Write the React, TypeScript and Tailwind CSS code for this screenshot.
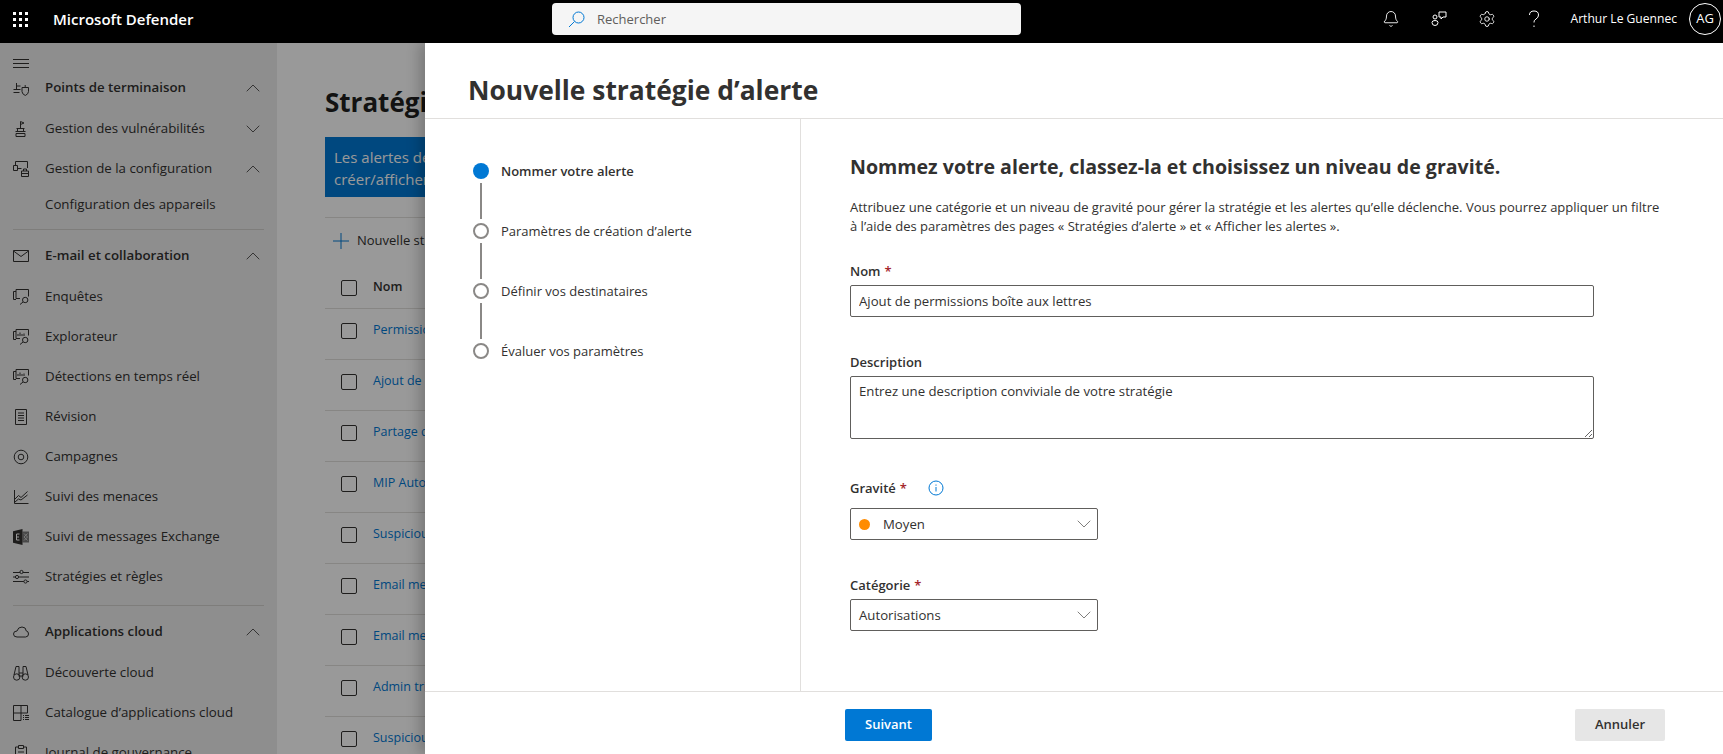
import { Bell, ChevronDown, ChevronUp, Settings } from "lucide-react";
import type { ReactNode } from "react";

const Ic = ({ children }: { children: ReactNode }) => (
  <svg width="16" height="16" viewBox="0 0 16 16" fill="none" stroke="currentColor" strokeWidth="1" className="shrink-0">
    {children}
  </svg>
);

const icons: Record<string, ReactNode> = {
  endpoint: (
    <Ic>
      <path d="M0.5 9.5h7M3.5 3v6.5M3.5 6h4M0.5 12.5h6" />
      <path d="M9 7.5h6.5v4q0 2.5-3.2 4q-3.3-1.5-3.3-4zM12.2 5v2.5" />
    </Ic>
  ),
  vuln: (
    <Ic>
      <path d="M7.5 7V0.5l3.5 1.5-3.5 1.500M3.500 7.500h8M4.500 7.500v3h6v-3M2.500 10.500h10M3 12.500h9v3H3z" />
    </Ic>
  ),
  config: (
    <Ic>
      <path d="M2.500 4V0.500h12V7M0.500 4.500h4v5h-4zM4.500 7.500h4M8.500 10h7v5.500h-7zM10.500 10V8h3v2M8.500 12.500h7" />
    </Ic>
  ),
  mail: (
    <Ic>
      <path d="M0.500 2.500h15v11h-15zM0.500 3l7.500 5.500L15.500 3" />
    </Ic>
  ),
  investigate: (
    <Ic>
      <path d="M3 10.500H0.500v-8H3M3 0.500h12.500v7M3 0.500v9h4" />
      <circle cx="12.200" cy="11" r="2.700" />
      <path d="M10 13L7 15.500" />
    </Ic>
  ),
  explorer: (
    <Ic>
      <path d="M3 10.500H0.500v-8H3M3 0.500h12.500v6M3 0.500v9h4M5 7V5M7 7V3.500M9 7V5M11 7V4.500" />
      <circle cx="12.200" cy="11" r="2.700" />
      <path d="M10 13L7 15.500" />
    </Ic>
  ),
  review: (
    <Ic>
      <path d="M2.500 0.500h11v15h-11zM5 4h6M5 6.500h6M5 9h6M5 11.500h6" />
    </Ic>
  ),
  campaign: (
    <Ic>
      <circle cx="8" cy="8" r="6.800" />
      <circle cx="8" cy="8" r="2.800" />
    </Ic>
  ),
  threat: (
    <Ic>
      <path d="M1.500 1v13.500h14M2 10l3.500-3.500L8 8.500l6.500-6M2 13l3.500-3L8 11l6.500-5" />
    </Ic>
  ),
  exchange: (
    <svg width="16" height="16" viewBox="0 0 16 16" className="shrink-0">
      <path d="M9.500 2.500H16v11H9.500z" fill="#7a7a7a" />
      <path d="M11 4.500l3.500 3.500-3.500 3.500M14.500 4.500L11 8l3.500 3.500" stroke="#c8c8c8" strokeWidth="1" fill="none" />
      <path d="M0 2.200L9.500 0v16L0 13.800z" fill="#323130" />
      <path d="M6.500 5H3.500v6h3M3.500 8h2.500" stroke="#ffffff" strokeWidth="1" fill="none" />
    </svg>
  ),
  rules: (
    <Ic>
      <path d="M0 3.500h16M0 8h16M0 12.500h16" />
      <circle cx="8.500" cy="3" r="1.600" fill="#ededed" />
      <circle cx="4" cy="8" r="1.600" fill="#ededed" />
      <circle cx="12.500" cy="12.500" r="1.600" fill="#ededed" />
    </Ic>
  ),
  cloud: (
    <Ic>
      <path d="M4 13q-3.500 0-3.500-3T4 7q1-4 5-4t4.300 4q2.200.2 2.200 3t-3 3z" />
    </Ic>
  ),
  discover: (
    <Ic>
      <circle cx="3.700" cy="12" r="3.200" />
      <circle cx="12.300" cy="12" r="3.200" />
      <path d="M1 10l2-8.500h3v10M15 10L13 1.500h-3v10M6 8h4M6 11h4" />
    </Ic>
  ),
  catalog: (
    <Ic>
      <path d="M0.500 0.500h14v7.500h-6.500v7.500H0.500zM8 0.500V8M0.500 8H8M10 10.500h1M12 10.500h4M10 12.500h1M12 12.500h4M10 14.500h1M12 14.500h4" />
    </Ic>
  ),
  journal: (
    <Ic>
      <path d="M5 2H2.500v13.500h11V2H11M5.500 0.500h5v3h-5zM5 7h6M5 9.500h6M5 12h6" />
    </Ic>
  ),
};

function NavRow({ icon, label, bold, chevron }: { icon?: string; label: string; bold?: boolean; chevron?: "up" | "down" }) {
  return (
    <div className={`flex h-10 items-center pl-[13px] pr-[12px] text-[#323130] ${bold ? "mb-[1px]" : ""}`}>
      <span className="flex w-[32px] shrink-0">{icon ? icons[icon] : null}</span>
      <span className={`flex-1 text-[13.3px] ${bold ? "font-semibold" : ""}`}>{label}</span>
      {chevron === "up" && <ChevronUp size={24} strokeWidth={0.8} />}
      {chevron === "down" && <ChevronDown size={24} strokeWidth={0.8} />}
    </div>
  );
}

const Sep = () => <div className="mx-[13px] mb-[6px] mt-[8px] h-[1px] bg-[#d2d0ce]" />;

function Sidebar() {
  return (
    <aside className="flex h-full w-[277px] shrink-0 flex-col bg-[#ededed]">
      <div className="flex h-[39px] shrink-0 items-start pl-[13px] pt-[16px] text-[#323130]">
        <svg width="16" height="10" viewBox="0 0 16 10" fill="none" stroke="currentColor" strokeWidth="1">
          <path d="M0 0.500h16M0 4.500h16M0 8.500h16" />
        </svg>
      </div>
      <div className="flex-1 overflow-hidden">
        <div className="-mt-[14px]">
          <NavRow icon="endpoint" label="Points de terminaison" bold chevron="up" />
          <NavRow icon="vuln" label="Gestion des vulnérabilités" chevron="down" />
          <NavRow icon="config" label="Gestion de la configuration" chevron="up" />
          <div className="flex h-[32px] items-center pl-[45px] text-[13.3px] text-[#323130]">Configuration des appareils</div>
          <Sep />
          <NavRow icon="mail" label="E-mail et collaboration" bold chevron="up" />
          <NavRow icon="investigate" label="Enquêtes" />
          <NavRow icon="explorer" label="Explorateur" />
          <NavRow icon="explorer" label="Détections en temps réel" />
          <NavRow icon="review" label="Révision" />
          <NavRow icon="campaign" label="Campagnes" />
          <NavRow icon="threat" label="Suivi des menaces" />
          <NavRow icon="exchange" label="Suivi de messages Exchange" />
          <NavRow icon="rules" label="Stratégies et règles" />
          <Sep />
          <NavRow icon="cloud" label="Applications cloud" bold chevron="up" />
          <NavRow icon="discover" label="Découverte cloud" />
          <NavRow icon="catalog" label="Catalogue d’applications cloud" />
          <NavRow icon="journal" label="Journal de gouvernance" />
        </div>
      </div>
    </aside>
  );
}

const rows = [
  "Permissions",
  "Ajout de droits",
  "Partage de fichiers",
  "MIP AutoLabel",
  "Suspicious email",
  "Email messages",
  "Email messages",
  "Admin triggered",
  "Suspicious connector",
];

function Background() {
  return (
    <main className="h-full flex-1 overflow-hidden bg-white pl-[48px]">
      <h1 className="mt-[39px] h-[40px] whitespace-nowrap text-[26px] font-bold leading-[40px] text-[#201f1e]">Stratégies d’alerte</h1>
      <div className="mt-[15px] h-[60px] whitespace-nowrap bg-[#0078d4] px-[9px] py-[9px] text-[15px] leading-[22px] text-white">
        <div>Les alertes de sécurité</div>
        <div>créer/afficher des alertes</div>
      </div>
      <div className="mt-[20px] flex h-[46px] items-center border-t border-[#e1dfdd] pl-[8px] text-[13px] text-[#323130]">
        <svg width="16" height="16" viewBox="0 0 16 16" fill="none" stroke="#0078d4" strokeWidth="1" className="mr-[8px]">
          <path d="M0 8h16M8 0v16" />
        </svg>
        <span>Nouvelle stratégie</span>
      </div>
      <div className="flex h-[46px] items-center border-b border-[#e1dfdd] pt-[4px] pl-[16px] text-[12.5px] font-semibold text-[#323130]">
        <span className="mr-[16px] h-4 w-4 rounded-[2px] border border-[#323130]" />
        <span>Nom</span>
      </div>
      {rows.map((r, i) => (
        <div key={i} className="flex h-[51px] items-start border-b border-[#e1dfdd] pl-[16px] pt-[13px] text-[12.5px] text-[#0078d4]">
          <span className="mr-[16px] mt-[1px] h-4 w-4 shrink-0 rounded-[2px] border border-[#323130]" />
          <span className="leading-[16px]">{r}</span>
        </div>
      ))}
    </main>
  );
}

function TopBar() {
  return (
    <header className="relative z-20 flex h-[43px] shrink-0 items-center bg-black pb-[5px] text-white">
      <div className="ml-[13px] grid w-[15px] grid-cols-3 gap-[3px]">
        {Array.from({ length: 9 }).map((_, i) => (
          <span key={i} className="h-[3px] w-[3px] bg-white" />
        ))}
      </div>
      <span className="ml-[25px] w-[499px] shrink-0 text-[15px] font-semibold">Microsoft Defender</span>
      <div className="flex h-[32px] w-[469px] items-center rounded-[4px] bg-[#f5f5f5] pl-[16px] text-[13px] text-[#605e5c]">
        <svg width="17" height="17" viewBox="0 0 17 17" fill="none" stroke="#0078d4" strokeWidth="1">
          <circle cx="10.500" cy="6.500" r="5.500" />
          <path d="M6.500 10.500L1 16" />
        </svg>
        <span className="ml-[12px] pt-[2px]">Rechercher</span>
      </div>
      <div className="ml-auto flex items-center">
        <Bell size={18} strokeWidth={1.2} />
        <svg width="16" height="16" viewBox="0 0 16 16" fill="none" stroke="currentColor" strokeWidth="1" className="ml-[31px]">
          <circle cx="4" cy="6" r="2" />
          <path d="M1 11.500q0-2 3-2t3 2q0 3-3 3t-3-3zM8 1h7v5h-3l-2 2V6H8z" />
        </svg>
        <Settings size={18} strokeWidth={1.2} className="ml-[31px]" />
        <svg width="12" height="18" viewBox="0 0 12 18" fill="none" stroke="currentColor" strokeWidth="1" className="ml-[32px]">
          <path d="M1.500 5q0-4 4.500-4t4.500 4q0 2.500-2.500 4T6 12.500M6 15.500v1.500" />
        </svg>
        <span className="ml-[31px] text-[12.1px]">Arthur Le Guennec</span>
        <span className="ml-[12px] mr-[2px] flex h-[32px] w-[32px] items-center justify-center rounded-full border border-white text-[13px]">AG</span>
      </div>
    </header>
  );
}

const steps = ["Nommer votre alerte", "Paramètres de création d’alerte", "Définir vos destinataires", "Évaluer vos paramètres"];

function Stepper() {
  return (
    <div className="w-[376px] shrink-0 border-r border-[#e1dfdd] pl-[48px] pt-[44px]">
      {steps.map((s, i) => (
        <div key={s}>
          <div className="flex h-[16px] items-center">
            <span className={`h-[16px] w-[16px] rounded-full ${i === 0 ? "bg-[#0078d4]" : "border-2 border-[#8a8886]"}`} />
            <span className={`ml-[12px] pt-[1px] text-[13px] text-[#323130] ${i === 0 ? "font-semibold" : ""}`}>{s}</span>
          </div>
          {i < steps.length - 1 && <div className="my-[4px] ml-[7px] h-[36px] w-[2px] bg-[#8a8886]" />}
        </div>
      ))}
    </div>
  );
}

const Label = ({ text, req, className }: { text: string; req?: boolean; className?: string }) => (
  <span className={`block text-[13px] font-semibold leading-[20px] text-[#323130] ${className ?? ""}`}>
    {text}
    {req && <span className="ml-[4px] text-[#a4262c]">*</span>}
  </span>
);

function Select({ children, className }: { children: ReactNode; className: string }) {
  return (
    <div className={`flex h-[32px] w-[248px] items-center rounded-[2px] border border-[#605e5c] pl-[8px] pr-[1px] text-[13.2px] text-[#323130] ${className}`}>
      <div className="flex flex-1 items-center pt-[1px]">{children}</div>
      <ChevronDown size={24} strokeWidth={0.8} className="text-[#605e5c]" />
    </div>
  );
}

function Form() {
  return (
    <div className="flex-1 pl-[49px] pt-[32px] text-[#323130]">
      <h2 className="whitespace-nowrap text-[19.6px] font-bold leading-[32px]">Nommez votre alerte, classez-la et choisissez un niveau de gravité.</h2>
      <p className="mt-[15px] w-[815px] text-[13px] leading-[19px]">
        Attribuez une catégorie et un niveau de gravité pour gérer la stratégie et les alertes qu’elle déclenche. Vous pourrez appliquer un filtre à l’aide des paramètres des pages « Stratégies d’alerte » et « Afficher les alertes ».
      </p>
      <Label text="Nom" req className="mt-[25px]" />
      <input
        readOnly
        value="Ajout de permissions boîte aux lettres"
        className="mt-[4px] block h-[32px] w-[744px] rounded-[2px] border border-[#605e5c] px-[8px] text-[13.2px] text-[#323130] outline-none"
      />
      <Label text="Description" className="mt-[35px]" />
      <textarea
        placeholder="Entrez une description conviviale de votre stratégie"
        className="mt-[4px] block h-[63px] w-[744px] rounded-[2px] border border-[#605e5c] px-[8px] py-[5px] text-[13.2px] text-[#323130] outline-none placeholder:text-[#323130]"
      />
      <div className="mt-[39px] flex items-center">
        <Label text="Gravité" req />
        <svg width="16" height="16" viewBox="0 0 16 16" fill="none" stroke="#0078d4" strokeWidth="1" className="ml-[21px]">
          <circle cx="8" cy="8" r="7" />
          <path d="M8 7v4.500M8 4.500v1.200" />
        </svg>
      </div>
      <Select className="mt-[10px]">
        <span className="mr-[13px] h-[11px] w-[11px] rounded-full bg-[#ff8c00]" />
        Moyen
      </Select>
      <Label text="Catégorie" req className="mt-[35px]" />
      <Select className="mt-[4px]">Autorisations</Select>
    </div>
  );
}

function Panel() {
  return (
    <section className="absolute bottom-0 left-[425px] right-0 top-[43px] z-10 flex flex-col bg-white shadow-[-6px_0_12px_rgba(0,0,0,0.2)]">
      <div className="h-[76px] shrink-0 border-b border-[#e1dfdd] pl-[43px] pt-[27px]">
        <h1 className="text-[26.4px] font-bold leading-[40px] text-[#323130]">Nouvelle stratégie d’alerte</h1>
      </div>
      <div className="flex flex-1">
        <Stepper />
        <Form />
      </div>
      <div className="flex h-[63px] shrink-0 items-start border-t border-[#e1dfdd] pt-[17px] text-[13px] font-semibold">
        <button className="ml-[420px] h-[32px] w-[87px] rounded-[2px] bg-[#0078d4] text-white">Suivant</button>
        <button className="ml-auto mr-[58px] h-[32px] w-[90px] rounded-[2px] bg-[#e6e6e6] text-[#323130]">Annuler</button>
      </div>
    </section>
  );
}

export default function App() {
  return (
    <div className="relative flex h-[754px] w-full flex-col overflow-hidden font-['Open_Sans',sans-serif]">
      <TopBar />
      <div className="relative flex flex-1 overflow-hidden">
        <Sidebar />
        <Background />
      </div>
      <div className="absolute inset-0 top-[43px] z-[5] bg-black/40" />
      <Panel />
    </div>
  );
}
